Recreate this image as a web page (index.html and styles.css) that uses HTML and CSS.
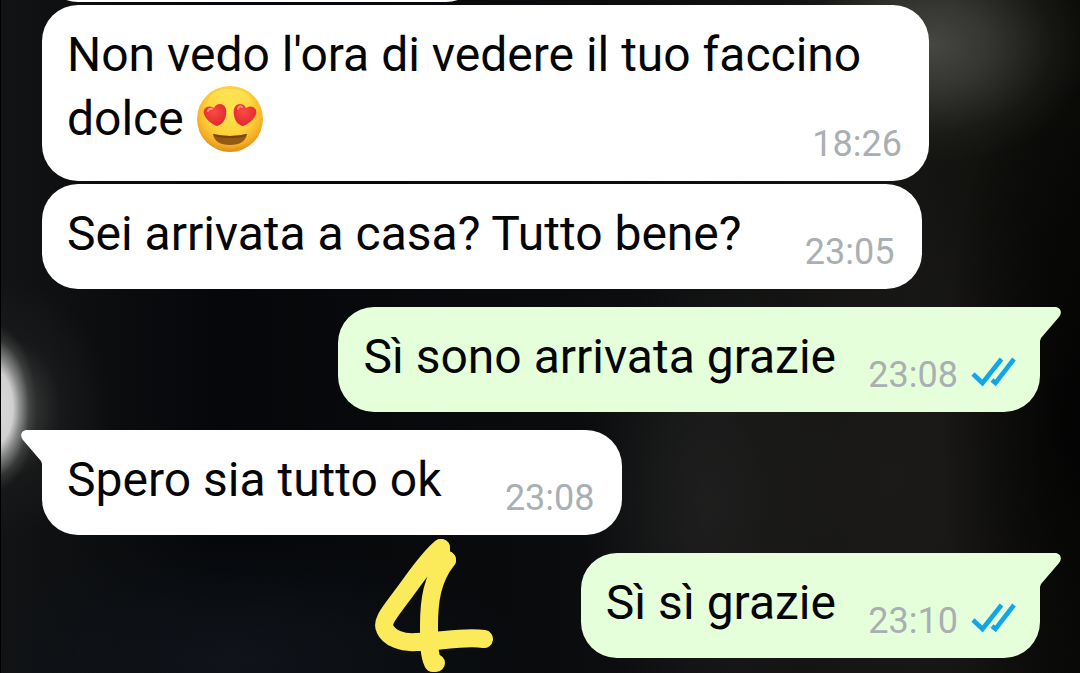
FILE: index.html
```html
<!DOCTYPE html>
<html lang="it">
<head>
<meta charset="utf-8">
<meta name="viewport" content="width=device-width, initial-scale=1">
<title>Chat</title>
<link rel="stylesheet" href="styles.css">
</head>
<body>
<svg class="defs" aria-hidden="true">
  <symbol id="ticks" viewBox="0 0 46 32">
    <path d="M3 18 L12.500 27 L31.500 3 M22 24 L25.500 27 L44 3" fill="none" stroke="#12a5e8" stroke-width="4.600"/>
  </symbol>
  <symbol id="tail" viewBox="0 0 22 36">
    <path d="M0 0 H15 C20 0 23 5 19 10 L1 31 L0 34 Z" fill="currentColor"/>
  </symbol>
</svg>
<main class="chat">
  <div class="previous"></div>
  <article class="bubble incoming long">
    <p class="text">Non vedo l'ora di vedere il tuo faccino dolce <svg class="emoji" viewBox="0 0 68 68" role="img" aria-label="Faccina con occhi a cuore">
      <defs>
        <radialGradient id="face" cx="50%" cy="38%" r="64%"><stop offset="0" stop-color="#ffe650"/><stop offset=".55" stop-color="#fdd338"/><stop offset=".82" stop-color="#f5ae26"/><stop offset="1" stop-color="#dc8418"/></radialGradient>
        <linearGradient id="shine" x1="0" y1="0" x2="0" y2="1"><stop offset="0" stop-color="#fff27c" stop-opacity=".5"/><stop offset="1" stop-color="#ffe344" stop-opacity="0"/></linearGradient>
        <radialGradient id="heart" cx="45%" cy="35%" r="70%"><stop offset="0" stop-color="#fb4b43"/><stop offset="1" stop-color="#dc252b"/></radialGradient>
      </defs>
      <circle cx="34" cy="34" r="33" fill="url(#face)"/>
      <ellipse cx="34" cy="17" rx="22" ry="13" fill="url(#shine)"/>
      <path d="M21 41 C30 39 31 28 30 24 C28 17 20 18 18 23 C13 19 6 23 8 29 C10 35 16 39 21 41Z" fill="url(#heart)"/>
      <path d="M47 41 C38 39 37 28 38 24 C40 17 48 18 50 23 C55 19 62 23 60 29 C58 35 52 39 47 41Z" fill="url(#heart)"/>
      <path d="M12 26 Q13 23 16 24 M42 24 Q43 20 46 22" stroke="#ff8b7d" stroke-width="2" fill="none" stroke-linecap="round"/>
      <path d="M17 49 Q34 53 51 49 Q49 60 34 60 Q19 60 17 49Z" fill="#945a14"/>
      <path d="M17 49 Q34 53 51 49 Q50 53 34 53 Q18 53 17 49Z" fill="#75430c"/>
    </svg><time class="meta">18:26</time></p>
  </article>
  <article class="bubble incoming follow">
    <p class="text">Sei arrivata a casa? Tutto bene?</p>
    <div class="meta"><time>23:05</time></div>
  </article>
  <article class="bubble outgoing">
    <svg class="tail" aria-hidden="true"><use href="#tail"/></svg>
    <p class="text">Sì sono arrivata grazie</p>
    <div class="meta"><time>23:08</time><svg class="ticks" role="img" aria-label="Letto"><use href="#ticks"/></svg></div>
  </article>
  <article class="bubble incoming first">
    <svg class="tail" aria-hidden="true"><use href="#tail"/></svg>
    <p class="text">Spero sia tutto ok</p>
    <div class="meta"><time>23:08</time></div>
  </article>
  <article class="bubble outgoing">
    <svg class="tail" aria-hidden="true"><use href="#tail"/></svg>
    <p class="text">Sì sì grazie</p>
    <div class="meta"><time>23:10</time><svg class="ticks" role="img" aria-label="Letto"><use href="#ticks"/></svg></div>
  </article>
  <svg class="mark" viewBox="0 0 120 134" role="img" aria-label="4">
    <path d="M67 9 C54 19 40 41 27 58 C16 73 7 83 11 90 C15 99 28 104 42 103 C66 103 88 97 110 100" />
    <path d="M73 21 C58 40 55 62 55 86 C55 104 55 116 59 124 H62" />
    <path d="M67 9 L67 20 L73 21 L60 32 Z" />
  </svg>
</main>
</body>
</html>
```

FILE: styles.css
```css
* {
  box-sizing: border-box;
}

body {
  margin: 0;
  background: #0b0b0b;
  font-family: Roboto, "Liberation Sans", sans-serif;
}

.defs {
  position: absolute;
  width: 0;
  height: 0;
}

.chat {
  position: relative;
  display: flex;
  flex-direction: column;
  min-height: 100vh;
  padding: 0 40px 15px 41px;
  overflow: hidden;
  border-left: 1px solid #000;
  background:
    radial-gradient(ellipse 44px 84px at -8px 408px, #dcdcdc 0, #d0d0d0 45%, #b0b0b0aa 62%, #70707044 82%, #40404000 100%),
    radial-gradient(ellipse 110px 130px at 0 408px, #4c4e4e 0, #1c1e1e99 55%, #1c1e1e00 100%),
    radial-gradient(ellipse 160px 120px at 930px 45px, #464643 0, #353532 35%, #1f1f1c88 75%, #1f1f1c00 100%),
    radial-gradient(ellipse 140px 400px at 1080px 420px, #030303 0, #03030300 100%),
    radial-gradient(ellipse 260px 300px at 890px 480px, #1b1a18 0, #1b1a1800 100%),
    radial-gradient(ellipse 130px 240px at 710px 500px, #1f2020 0, #1f202000 100%),
    radial-gradient(ellipse 300px 120px at 230px 660px, #10141a 0, #10141a00 100%),
    linear-gradient(90deg, #111314 0, #05070a 20%, #090b0d 50%, #151513 85%, #0b0b08 100%);
}

.previous {
  width: 440px;
  height: 72px;
  margin-top: -70px;
  margin-bottom: 3px;
  border-radius: 36px;
  background: #fff;
}

.bubble {
  position: relative;
  display: grid;
  max-width: 887px;
  padding: 18px 27px 17px 25px;
  border-radius: 36px;
}

.incoming {
  align-self: flex-start;
  background: #fff;
  color: #fff;
}

.outgoing {
  align-self: flex-end;
  margin-top: 18px;
  padding-right: 24px;
  border-top-right-radius: 0;
  background: #e5ffdb;
  color: #e5ffdb;
}

.follow {
  margin-top: 3px;
}

.first {
  margin-top: 18px;
  border-top-left-radius: 0;
}

.text {
  grid-area: 1 / 1;
  margin: 0 0 6px;
  padding-right: 153px;
  color: #050505;
  font-size: 48px;
  line-height: 64px;
}

.outgoing .text {
  padding-right: 180px;
}

.meta {
  grid-area: 1 / 1;
  place-self: end;
  display: flex;
  align-items: center;
  gap: 12px;
  color: #a9afb2;
  font-size: 36px;
  line-height: 40px;
}

.long {
  display: block;
}

.long .text {
  display: flow-root;
  margin: 0;
  padding: 0;
}

.long .meta {
  float: right;
  margin-top: 37px;
}

.ticks {
  width: 46px;
  height: 32px;
  margin-bottom: 6px;
}

.emoji {
  width: 68px;
  height: 68px;
  margin: -3px 0;
  vertical-align: -15px;
}

.tail {
  position: absolute;
  top: 0;
  left: 100%;
  width: 22px;
  height: 36px;
}

.incoming .tail {
  right: 100%;
  left: auto;
  transform: scaleX(-1);
}

.mark {
  position: absolute;
  top: 539px;
  left: 373px;
  width: 120px;
  height: 134px;
  fill: none;
  stroke: #fbea59;
  stroke-width: 18px;
  stroke-linecap: round;
  stroke-linejoin: round;
}
```
